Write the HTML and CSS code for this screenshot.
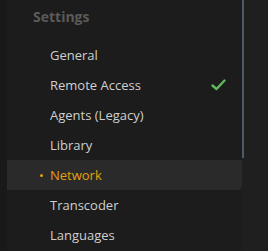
FILE: index.html
```html
<!DOCTYPE html>
<html lang="en">
<head>
  <meta charset="UTF-8">
  <title>Settings</title>
  <link rel="stylesheet" href="styles.css">
</head>
<body>
  <div class="gutter"></div>

  <!-- Settings sidebar -->
  <nav class="sidebar">
    <h2 class="sidebar-title">Settings</h2>
    <ul class="nav-list">
      <li class="nav-item">General</li>
      <li class="nav-item">
        <span>Remote Access</span>
        <svg class="check" width="15" height="12" viewBox="0 0 15 12">
          <polyline points="1.5,6.5 5.5,10 13.5,1.5" fill="none" stroke="#5fb95a" stroke-width="2.4" stroke-linecap="round" stroke-linejoin="round"/>
        </svg>
      </li>
      <li class="nav-item">Agents (Legacy)</li>
      <li class="nav-item">Library</li>
      <li class="nav-item active">Network</li>
      <li class="nav-item">Transcoder</li>
      <li class="nav-item">Languages</li>
    </ul>
  </nav>

  <div class="scroll-track"><div class="scroll-thumb"></div></div>
  <div class="content"></div>
</body>
</html>
```

FILE: styles.css
```css
/* Global */
body {
  margin: 0;
  height: 251px;
  display: flex;
  background-color: #1f1f1f;
  font-family: 'Open Sans', 'Liberation Sans', sans-serif;
  overflow: hidden;
}

.gutter {
  width: 7px;
  background-color: #191919;
}

/* Sidebar */
.sidebar {
  width: 235px;
  background-color: #1c1c1c;
}

.sidebar-title {
  margin: 0;
  padding: 7px 0 0 26px;
  height: 33px;
  font-size: 14px;
  line-height: 20px;
  font-weight: bold;
  color: #5a5a5a;
}

.nav-list {
  list-style: none;
  margin: 0;
  padding: 0;
}

.nav-item {
  display: flex;
  align-items: center;
  justify-content: space-between;
  height: 30px;
  padding: 0 16px 0 43px;
  font-size: 13px;
  color: #cfcfcf;
  position: relative;
}

.nav-item.active {
  background-color: #2a2a2a;
  color: #e5a00d;
  border-radius: 0 0 4px 0;
}

.nav-item.active::before {
  content: "";
  position: absolute;
  left: 33px;
  top: 14px;
  width: 3px;
  height: 3px;
  border-radius: 50%;
  background-color: #e5a00d;
}

/* Scrollbar */
.scroll-track {
  width: 2px;
}

.scroll-thumb {
  height: 158px;
  background-color: #4b5a6b;
}

.content {
  flex: 1;
}
```
